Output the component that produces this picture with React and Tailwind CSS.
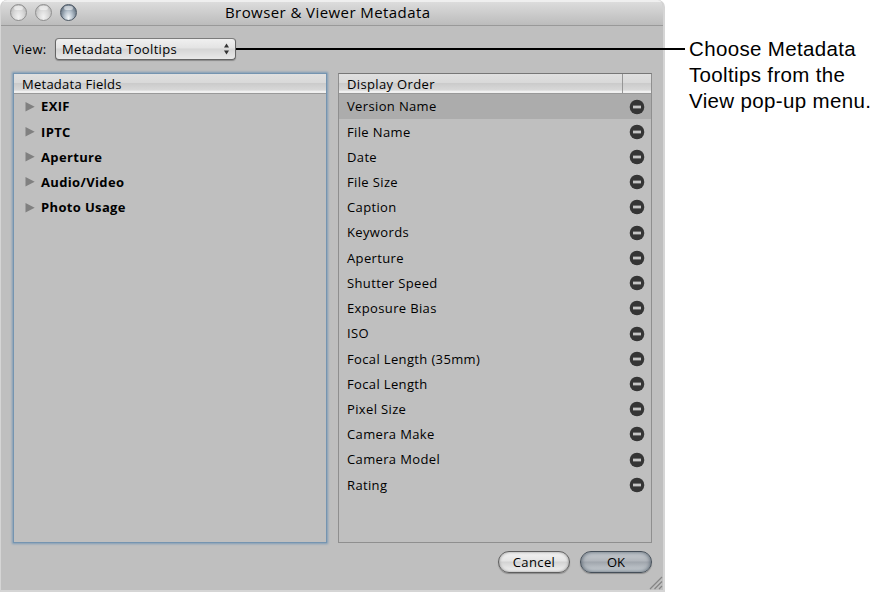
import React from 'react';

const metadataGroups = ['EXIF', 'IPTC', 'Aperture', 'Audio/Video', 'Photo Usage'];

const displayOrder = [
    'Version Name',
    'File Name',
    'Date',
    'File Size',
    'Caption',
    'Keywords',
    'Aperture',
    'Shutter Speed',
    'Exposure Bias',
    'ISO',
    'Focal Length (35mm)',
    'Focal Length',
    'Pixel Size',
    'Camera Make',
    'Camera Model',
    'Rating'
];

const HEADER_FILL = 'bg-[linear-gradient(#e0e0e0_0%,#d9d9d9_45%,#cbcbcb_50%,#d8d8d8_85%,#f0f0f0_90%,#f0f0f0_100%)]';

const WindowButton = ({ active }) => (
    <span
        className={`block w-[17px] h-[17px] rounded-full border ${active
            ? 'border-[#4d5864] bg-[radial-gradient(ellipse_at_50%_85%,#f4f8fb_0%,#b3bfca_40%,#72808e_75%,#49535f_100%)]'
            : 'border-[#8f8f8f] bg-[radial-gradient(ellipse_at_50%_80%,#f2f2f2_0%,#d6d6d6_50%,#aeaeae_100%)]'
            }`}
    >
        <span className="block mx-auto mt-px w-[9px] h-[4px] rounded-full bg-white/50" />
    </span>
);

const TitleBar = () => (
    <header className="relative h-[26px] shrink-0 flex items-start border-t-2 border-b border-t-[#efefef] border-b-[#999999] bg-linear-to-b from-[#dcdcdc] to-[#bcbcbc]">
        <div className="flex gap-[8px] pl-[9px] pt-[2px]">
            <WindowButton />
            <WindowButton />
            <WindowButton active />
        </div>
        <h1 className="absolute left-[224px] top-0 text-[15px] leading-[21px] tracking-[0.42px] whitespace-nowrap">Browser &amp; Viewer Metadata</h1>
    </header>
);

const ViewSelect = () => (
    <div className="flex items-center h-[22px] mt-[12px] pl-[12px]">
        <span className="w-[42px] pt-px text-[13px] tracking-[0.35px]">View:</span>
        <button className="w-[181px] h-[22px] flex items-center justify-between pl-[6px] pr-[5px] rounded-[4px] border border-[#656565] border-t-[#7c7c7c] bg-[linear-gradient(#f0f0f0_0%,#e3e3e3_45%,#d5d5d5_50%,#e9e9e9_100%)] shadow-[0_1px_1px_#8a8a8a]">
            <span className="pt-px text-[13px] tracking-[0.33px]">Metadata Tooltips</span>
            <svg width="7" height="12" viewBox="0 0 7 12" fill="#333333">
                <path d="M3.5 0.5 L6 4.5 H1 Z" />
                <path d="M3.5 11.5 L6 7.5 H1 Z" />
            </svg>
        </button>
    </div>
);

const FieldsPanel = () => (
    <section className="w-[312px] h-[468px] ml-[13px] mt-[2px] outline-[1.5px] outline-[#7594b0] shadow-[0_0_2px_2px_#7f9cb6]">
        <div className={`h-[20px] pl-[8px] border-b border-[#999999] text-[13px] leading-[21px] tracking-[0.25px] ${HEADER_FILL}`}>
            Metadata Fields
        </div>
        <ul>
            {metadataGroups.map((name) => (
                <li key={name} className="h-[25.25px] flex items-center pl-[11px] gap-[6px]">
                    <svg width="10" height="10" viewBox="0 0 10 10" fill="#808080">
                        <path d="M0.5 0 L9.7 4.8 L0.5 9.6 Z" />
                    </svg>
                    <span className="pt-px text-[13px] font-bold tracking-[0.35px]">{name}</span>
                </li>
            ))}
        </ul>
    </section>
);

const RemoveIcon = () => (
    <svg width="16" height="16" viewBox="0 0 16 16">
        <circle cx="8" cy="8" r="7.3" fill="#353535" />
        <rect x="4" y="6.6" width="8" height="2.8" fill="#c4c4c4" />
    </svg>
);

const OrderPanel = () => (
    <section className="w-[314px] h-[470px] ml-[12px] mt-px border border-[#8f8f8f] border-t-[#777777]">
        <div className={`h-[20px] flex border-b border-[#999999] ${HEADER_FILL}`}>
            <span className="w-[284px] pl-[8px] border-r border-[#969696] text-[13px] leading-[21px] tracking-[0.35px]">Display Order</span>
        </div>
        <ul>
            {displayOrder.map((name, i) => (
                <li
                    key={name}
                    className={`h-[25.22px] flex items-center justify-between pl-[8px] pr-[6px] ${i === 0 ? 'bg-[#acacac]' : ''}`}
                >
                    <span className="pt-px text-[13px] tracking-[0.36px]">{name}</span>
                    <RemoveIcon />
                </li>
            ))}
        </ul>
    </section>
);

const Footer = () => (
    <footer className="flex gap-[10px] justify-end pr-[11px] mt-[7px]">
        <button className="w-[72px] h-[22px] rounded-full border border-[#5e5e5e] text-[13px] leading-[20px] tracking-[0.4px] bg-[linear-gradient(#f3f3f3_0%,#e4e4e4_45%,#d3d3d3_50%,#f3f3f3_100%)] shadow-[0_1px_1px_#8b8b8b,inset_0_0_3px_#8b8b8b]">
            Cancel
        </button>
        <button className="w-[72px] h-[22px] rounded-full border border-[#454f59] text-[13px] leading-[20px] bg-[linear-gradient(#c9ced3_0%,#b0b5bb_45%,#9fa5ac_50%,#cdd3d8_100%)] shadow-[0_1px_1px_#8b8b8b,inset_0_0_4px_#4e5b68]">
            OK
        </button>
    </footer>
);

const ResizeGrip = () => (
    <svg className="absolute right-0 bottom-0" width="14" height="14" viewBox="0 0 14 14" stroke="#858585" strokeWidth="1.2">
        <path d="M1 13 L13 1 M5.5 13 L13 5.5 M10 13 L13 10" />
    </svg>
);

const App = () => {
    return (
        <main className="relative w-[888px] h-[596px] flex bg-white text-black overflow-hidden font-['Open_Sans',sans-serif]">
            <div className="relative w-[665px] h-[592px] shrink-0 flex flex-col rounded-t-[7px] overflow-hidden bg-[#bfbfbf] border-r-2 border-b-2 border-l border-[#d5d5d5]">
                <TitleBar />
                <ViewSelect />
                <div className="flex items-start mt-[12px] h-[472px]">
                    <FieldsPanel />
                    <OrderPanel />
                </div>
                <Footer />
                <ResizeGrip />
            </div>
            <p className="pl-[24px] pt-[36px] text-[20.5px] leading-[26px] tracking-[0.35px] whitespace-nowrap font-['Liberation_Sans',Arial,sans-serif]">
                Choose Metadata<br />
                Tooltips from the<br />
                View pop-up menu.
            </p>
            {/* Leader line from the pop-up menu to its callout */}
            <div className="absolute left-[236px] top-[48px] w-[449px] h-[2px] bg-black" />
        </main>
    );
};

export default App;
